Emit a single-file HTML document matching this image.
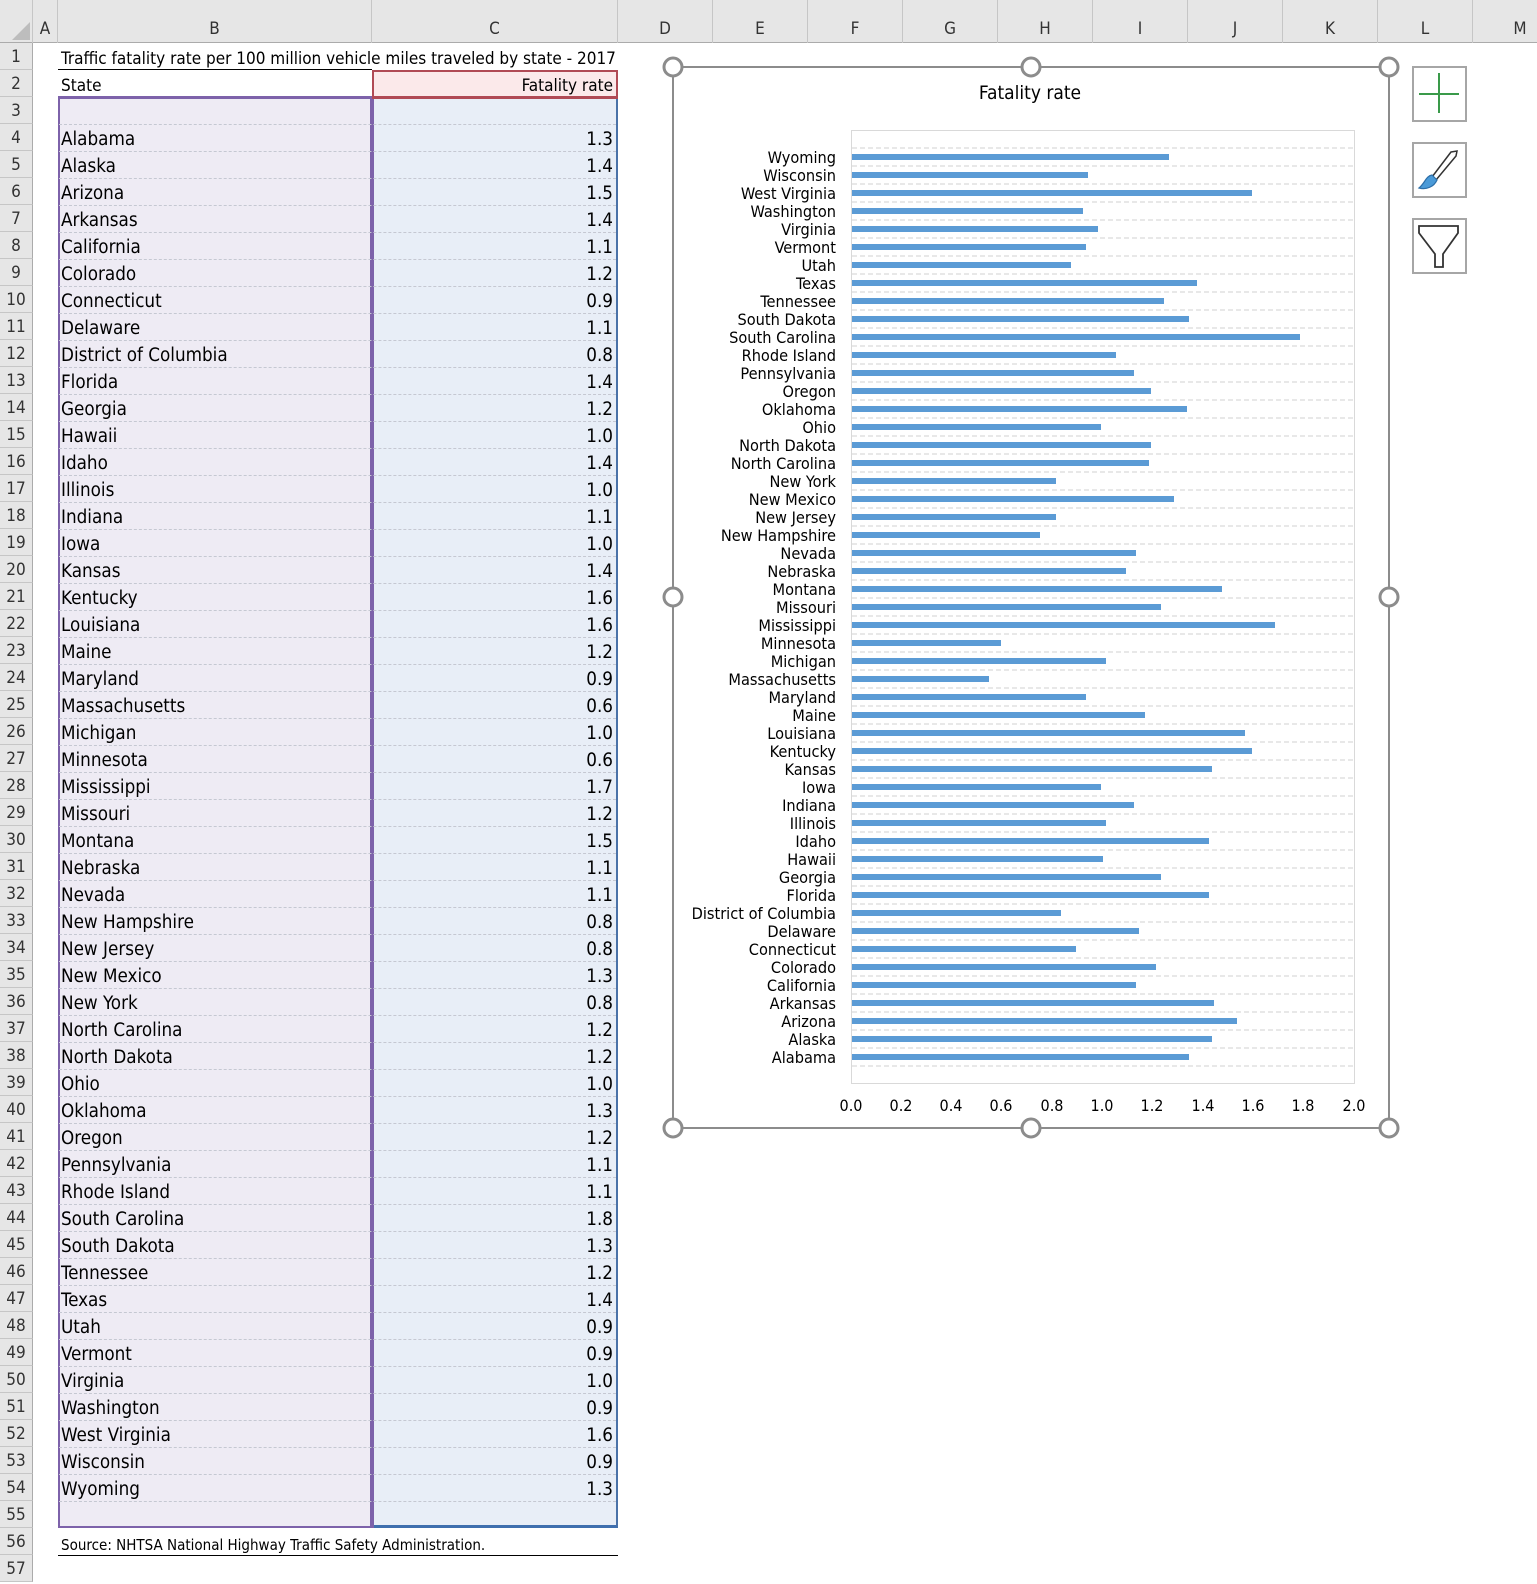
<!DOCTYPE html>
<html><head><meta charset="utf-8"><style>
*{margin:0;padding:0;box-sizing:border-box}
body{width:1537px;height:1583px;background:#fff;font-family:"DejaVu Sans Condensed","Liberation Sans",sans-serif;color:#000;position:relative;overflow:hidden}
.ch{position:absolute;top:0;height:43px;background:#e6e6e6;border-bottom:1px solid #ababab}
.colh{position:absolute;top:0;height:43px;border-right:1px solid #c6c6c6;font-size:17px;line-height:58px;text-align:center;color:#333}
.rh{position:absolute;left:0;width:33px;height:27px;background:#e6e6e6;border-bottom:1px solid #c6c6c6;border-right:1px solid #ababab;font-size:17px;line-height:29px;text-align:center;color:#333}
.r{position:absolute;height:27px;font-size:18.7px;line-height:31px;white-space:nowrap}
.b{left:61px}
.c{left:372px;width:241px;text-align:right}
.sep{position:absolute;left:59px;width:557px;height:0;border-top:1px dashed #c5c8d2}
</style></head><body>
<div class="ch" style="left:0;width:1537px"></div>
<svg style="position:absolute;left:0;top:0" width="33" height="43"><polygon points="30,22 30,40 12,40" fill="#bdbdbd"/></svg>
<div class="colh" style="left:0;width:33px;line-height:43px"></div>
<div class="colh" style="left:33px;width:25px">A</div>
<div class="colh" style="left:58px;width:314px">B</div>
<div class="colh" style="left:372px;width:246px">C</div>
<div class="colh" style="left:618px;width:95px">D</div>
<div class="colh" style="left:713px;width:95px">E</div>
<div class="colh" style="left:808px;width:95px">F</div>
<div class="colh" style="left:903px;width:95px">G</div>
<div class="colh" style="left:998px;width:95px">H</div>
<div class="colh" style="left:1093px;width:95px">I</div>
<div class="colh" style="left:1188px;width:95px">J</div>
<div class="colh" style="left:1283px;width:95px">K</div>
<div class="colh" style="left:1378px;width:95px">L</div>
<div class="colh" style="left:1473px;width:95px">M</div>

<div style="position:absolute;left:58px;top:97px;width:314px;height:1431px;background:#eeebf4;border:2px solid #7d62aa;border-top:none"></div>
<div style="position:absolute;left:372px;top:97px;width:246px;height:1431px;background:#e8eef7;border-right:2px solid #4a72a8;border-bottom:3px solid #3f6fae"></div>
<div style="position:absolute;left:372px;top:97px;width:2px;height:1431px;background:#7d62aa"></div>
<div style="position:absolute;left:58px;top:96px;width:316px;height:3px;background:#7d62aa"></div>
<div style="position:absolute;left:372px;top:70px;width:246px;height:29px;background:#fbe9ea;border:2px solid #b04a55;border-bottom-width:3px"></div>
<div style="position:absolute;left:58px;top:69px;width:314px;height:1px;background:#000"></div>
<div style="position:absolute;left:58px;top:1555px;width:560px;height:1px;background:#000"></div>

<div class="r b" style="top:44px;font-size:17px">Traffic fatality rate per 100 million vehicle miles traveled by state - 2017</div>
<div class="r b" style="top:71px;font-size:17px">State</div>
<div class="r c" style="top:71px;font-size:17px">Fatality rate</div>
<div class="r b" style="top:1530px;font-size:15px">Source: NHTSA National Highway Traffic Safety Administration.</div>

<div class="rh" style="top:43px">1</div><div class="rh" style="top:70px">2</div><div class="rh" style="top:97px">3</div><div class="rh" style="top:124px">4</div><div class="rh" style="top:151px">5</div><div class="rh" style="top:178px">6</div><div class="rh" style="top:205px">7</div><div class="rh" style="top:232px">8</div><div class="rh" style="top:259px">9</div><div class="rh" style="top:286px">10</div><div class="rh" style="top:313px">11</div><div class="rh" style="top:340px">12</div><div class="rh" style="top:367px">13</div><div class="rh" style="top:394px">14</div><div class="rh" style="top:421px">15</div><div class="rh" style="top:448px">16</div><div class="rh" style="top:475px">17</div><div class="rh" style="top:502px">18</div><div class="rh" style="top:529px">19</div><div class="rh" style="top:556px">20</div><div class="rh" style="top:583px">21</div><div class="rh" style="top:610px">22</div><div class="rh" style="top:637px">23</div><div class="rh" style="top:664px">24</div><div class="rh" style="top:691px">25</div><div class="rh" style="top:718px">26</div><div class="rh" style="top:745px">27</div><div class="rh" style="top:772px">28</div><div class="rh" style="top:799px">29</div><div class="rh" style="top:826px">30</div><div class="rh" style="top:853px">31</div><div class="rh" style="top:880px">32</div><div class="rh" style="top:907px">33</div><div class="rh" style="top:934px">34</div><div class="rh" style="top:961px">35</div><div class="rh" style="top:988px">36</div><div class="rh" style="top:1015px">37</div><div class="rh" style="top:1042px">38</div><div class="rh" style="top:1069px">39</div><div class="rh" style="top:1096px">40</div><div class="rh" style="top:1123px">41</div><div class="rh" style="top:1150px">42</div><div class="rh" style="top:1177px">43</div><div class="rh" style="top:1204px">44</div><div class="rh" style="top:1231px">45</div><div class="rh" style="top:1258px">46</div><div class="rh" style="top:1285px">47</div><div class="rh" style="top:1312px">48</div><div class="rh" style="top:1339px">49</div><div class="rh" style="top:1366px">50</div><div class="rh" style="top:1393px">51</div><div class="rh" style="top:1420px">52</div><div class="rh" style="top:1447px">53</div><div class="rh" style="top:1474px">54</div><div class="rh" style="top:1501px">55</div><div class="rh" style="top:1528px">56</div><div class="rh" style="top:1555px">57</div>

<div class="sep" style="top:124px"></div><div class="sep" style="top:151px"></div><div class="sep" style="top:178px"></div><div class="sep" style="top:205px"></div><div class="sep" style="top:232px"></div><div class="sep" style="top:259px"></div><div class="sep" style="top:286px"></div><div class="sep" style="top:313px"></div><div class="sep" style="top:340px"></div><div class="sep" style="top:367px"></div><div class="sep" style="top:394px"></div><div class="sep" style="top:421px"></div><div class="sep" style="top:448px"></div><div class="sep" style="top:475px"></div><div class="sep" style="top:502px"></div><div class="sep" style="top:529px"></div><div class="sep" style="top:556px"></div><div class="sep" style="top:583px"></div><div class="sep" style="top:610px"></div><div class="sep" style="top:637px"></div><div class="sep" style="top:664px"></div><div class="sep" style="top:691px"></div><div class="sep" style="top:718px"></div><div class="sep" style="top:745px"></div><div class="sep" style="top:772px"></div><div class="sep" style="top:799px"></div><div class="sep" style="top:826px"></div><div class="sep" style="top:853px"></div><div class="sep" style="top:880px"></div><div class="sep" style="top:907px"></div><div class="sep" style="top:934px"></div><div class="sep" style="top:961px"></div><div class="sep" style="top:988px"></div><div class="sep" style="top:1015px"></div><div class="sep" style="top:1042px"></div><div class="sep" style="top:1069px"></div><div class="sep" style="top:1096px"></div><div class="sep" style="top:1123px"></div><div class="sep" style="top:1150px"></div><div class="sep" style="top:1177px"></div><div class="sep" style="top:1204px"></div><div class="sep" style="top:1231px"></div><div class="sep" style="top:1258px"></div><div class="sep" style="top:1285px"></div><div class="sep" style="top:1312px"></div><div class="sep" style="top:1339px"></div><div class="sep" style="top:1366px"></div><div class="sep" style="top:1393px"></div><div class="sep" style="top:1420px"></div><div class="sep" style="top:1447px"></div><div class="sep" style="top:1474px"></div><div class="sep" style="top:1501px"></div>

<div class="r b" style="top:124px">Alabama</div><div class="r c" style="top:124px">1.3</div>
<div class="r b" style="top:151px">Alaska</div><div class="r c" style="top:151px">1.4</div>
<div class="r b" style="top:178px">Arizona</div><div class="r c" style="top:178px">1.5</div>
<div class="r b" style="top:205px">Arkansas</div><div class="r c" style="top:205px">1.4</div>
<div class="r b" style="top:232px">California</div><div class="r c" style="top:232px">1.1</div>
<div class="r b" style="top:259px">Colorado</div><div class="r c" style="top:259px">1.2</div>
<div class="r b" style="top:286px">Connecticut</div><div class="r c" style="top:286px">0.9</div>
<div class="r b" style="top:313px">Delaware</div><div class="r c" style="top:313px">1.1</div>
<div class="r b" style="top:340px">District of Columbia</div><div class="r c" style="top:340px">0.8</div>
<div class="r b" style="top:367px">Florida</div><div class="r c" style="top:367px">1.4</div>
<div class="r b" style="top:394px">Georgia</div><div class="r c" style="top:394px">1.2</div>
<div class="r b" style="top:421px">Hawaii</div><div class="r c" style="top:421px">1.0</div>
<div class="r b" style="top:448px">Idaho</div><div class="r c" style="top:448px">1.4</div>
<div class="r b" style="top:475px">Illinois</div><div class="r c" style="top:475px">1.0</div>
<div class="r b" style="top:502px">Indiana</div><div class="r c" style="top:502px">1.1</div>
<div class="r b" style="top:529px">Iowa</div><div class="r c" style="top:529px">1.0</div>
<div class="r b" style="top:556px">Kansas</div><div class="r c" style="top:556px">1.4</div>
<div class="r b" style="top:583px">Kentucky</div><div class="r c" style="top:583px">1.6</div>
<div class="r b" style="top:610px">Louisiana</div><div class="r c" style="top:610px">1.6</div>
<div class="r b" style="top:637px">Maine</div><div class="r c" style="top:637px">1.2</div>
<div class="r b" style="top:664px">Maryland</div><div class="r c" style="top:664px">0.9</div>
<div class="r b" style="top:691px">Massachusetts</div><div class="r c" style="top:691px">0.6</div>
<div class="r b" style="top:718px">Michigan</div><div class="r c" style="top:718px">1.0</div>
<div class="r b" style="top:745px">Minnesota</div><div class="r c" style="top:745px">0.6</div>
<div class="r b" style="top:772px">Mississippi</div><div class="r c" style="top:772px">1.7</div>
<div class="r b" style="top:799px">Missouri</div><div class="r c" style="top:799px">1.2</div>
<div class="r b" style="top:826px">Montana</div><div class="r c" style="top:826px">1.5</div>
<div class="r b" style="top:853px">Nebraska</div><div class="r c" style="top:853px">1.1</div>
<div class="r b" style="top:880px">Nevada</div><div class="r c" style="top:880px">1.1</div>
<div class="r b" style="top:907px">New Hampshire</div><div class="r c" style="top:907px">0.8</div>
<div class="r b" style="top:934px">New Jersey</div><div class="r c" style="top:934px">0.8</div>
<div class="r b" style="top:961px">New Mexico</div><div class="r c" style="top:961px">1.3</div>
<div class="r b" style="top:988px">New York</div><div class="r c" style="top:988px">0.8</div>
<div class="r b" style="top:1015px">North Carolina</div><div class="r c" style="top:1015px">1.2</div>
<div class="r b" style="top:1042px">North Dakota</div><div class="r c" style="top:1042px">1.2</div>
<div class="r b" style="top:1069px">Ohio</div><div class="r c" style="top:1069px">1.0</div>
<div class="r b" style="top:1096px">Oklahoma</div><div class="r c" style="top:1096px">1.3</div>
<div class="r b" style="top:1123px">Oregon</div><div class="r c" style="top:1123px">1.2</div>
<div class="r b" style="top:1150px">Pennsylvania</div><div class="r c" style="top:1150px">1.1</div>
<div class="r b" style="top:1177px">Rhode Island</div><div class="r c" style="top:1177px">1.1</div>
<div class="r b" style="top:1204px">South Carolina</div><div class="r c" style="top:1204px">1.8</div>
<div class="r b" style="top:1231px">South Dakota</div><div class="r c" style="top:1231px">1.3</div>
<div class="r b" style="top:1258px">Tennessee</div><div class="r c" style="top:1258px">1.2</div>
<div class="r b" style="top:1285px">Texas</div><div class="r c" style="top:1285px">1.4</div>
<div class="r b" style="top:1312px">Utah</div><div class="r c" style="top:1312px">0.9</div>
<div class="r b" style="top:1339px">Vermont</div><div class="r c" style="top:1339px">0.9</div>
<div class="r b" style="top:1366px">Virginia</div><div class="r c" style="top:1366px">1.0</div>
<div class="r b" style="top:1393px">Washington</div><div class="r c" style="top:1393px">0.9</div>
<div class="r b" style="top:1420px">West Virginia</div><div class="r c" style="top:1420px">1.6</div>
<div class="r b" style="top:1447px">Wisconsin</div><div class="r c" style="top:1447px">0.9</div>
<div class="r b" style="top:1474px">Wyoming</div><div class="r c" style="top:1474px">1.3</div>

<svg style="position:absolute;left:0;top:0" width="1537" height="1583" font-family="DejaVu Sans Condensed, Liberation Sans, sans-serif">
<rect x="673" y="67" width="716" height="1061" fill="#fff" stroke="#8c8c8c" stroke-width="2"/>
<text x="1030" y="99" font-size="19" text-anchor="middle">Fatality rate</text>
<rect x="851.5" y="130.5" width="503" height="953" fill="#fff" stroke="#d9d9d9"/>
<g stroke="#d0d0d0" stroke-dasharray="5,3" stroke-width="1">
<path d="M852 148H1354M852 166H1354M852 184H1354M852 202H1354M852 220H1354M852 238H1354M852 256H1354M852 274H1354M852 292H1354M852 310H1354M852 328H1354M852 346H1354M852 364H1354M852 382H1354M852 400H1354M852 418H1354M852 436H1354M852 454H1354M852 472H1354M852 490H1354M852 508H1354M852 526H1354M852 544H1354M852 562H1354M852 580H1354M852 598H1354M852 616H1354M852 634H1354M852 652H1354M852 670H1354M852 688H1354M852 706H1354M852 724H1354M852 742H1354M852 760H1354M852 778H1354M852 796H1354M852 814H1354M852 832H1354M852 850H1354M852 868H1354M852 886H1354M852 904H1354M852 922H1354M852 940H1354M852 958H1354M852 976H1354M852 994H1354M852 1012H1354M852 1030H1354M852 1048H1354M852 1066H1354"/>
</g>
<g fill="#5b9bd5">
<rect x="852" y="154" width="317" height="6"/><rect x="852" y="172" width="236" height="6"/><rect x="852" y="190" width="400" height="6"/><rect x="852" y="208" width="231" height="6"/><rect x="852" y="226" width="246" height="6"/><rect x="852" y="244" width="234" height="6"/><rect x="852" y="262" width="219" height="6"/><rect x="852" y="280" width="345" height="6"/><rect x="852" y="298" width="312" height="6"/><rect x="852" y="316" width="337" height="6"/><rect x="852" y="334" width="448" height="6"/><rect x="852" y="352" width="264" height="6"/><rect x="852" y="370" width="282" height="6"/><rect x="852" y="388" width="299" height="6"/><rect x="852" y="406" width="335" height="6"/><rect x="852" y="424" width="249" height="6"/><rect x="852" y="442" width="299" height="6"/><rect x="852" y="460" width="297" height="6"/><rect x="852" y="478" width="204" height="6"/><rect x="852" y="496" width="322" height="6"/><rect x="852" y="514" width="204" height="6"/><rect x="852" y="532" width="188" height="6"/><rect x="852" y="550" width="284" height="6"/><rect x="852" y="568" width="274" height="6"/><rect x="852" y="586" width="370" height="6"/><rect x="852" y="604" width="309" height="6"/><rect x="852" y="622" width="423" height="6"/><rect x="852" y="640" width="149" height="6"/><rect x="852" y="658" width="254" height="6"/><rect x="852" y="676" width="137" height="6"/><rect x="852" y="694" width="234" height="6"/><rect x="852" y="712" width="293" height="6"/><rect x="852" y="730" width="393" height="6"/><rect x="852" y="748" width="400" height="6"/><rect x="852" y="766" width="360" height="6"/><rect x="852" y="784" width="249" height="6"/><rect x="852" y="802" width="282" height="6"/><rect x="852" y="820" width="254" height="6"/><rect x="852" y="838" width="357" height="6"/><rect x="852" y="856" width="251" height="6"/><rect x="852" y="874" width="309" height="6"/><rect x="852" y="892" width="357" height="6"/><rect x="852" y="910" width="209" height="6"/><rect x="852" y="928" width="287" height="6"/><rect x="852" y="946" width="224" height="6"/><rect x="852" y="964" width="304" height="6"/><rect x="852" y="982" width="284" height="6"/><rect x="852" y="1000" width="362" height="6"/><rect x="852" y="1018" width="385" height="6"/><rect x="852" y="1036" width="360" height="6"/><rect x="852" y="1054" width="337" height="6"/>
</g>
<g font-size="16.2" text-anchor="end">
<text x="836" y="163">Wyoming</text><text x="836" y="181">Wisconsin</text><text x="836" y="199">West Virginia</text><text x="836" y="217">Washington</text><text x="836" y="235">Virginia</text><text x="836" y="253">Vermont</text><text x="836" y="271">Utah</text><text x="836" y="289">Texas</text><text x="836" y="307">Tennessee</text><text x="836" y="325">South Dakota</text><text x="836" y="343">South Carolina</text><text x="836" y="361">Rhode Island</text><text x="836" y="379">Pennsylvania</text><text x="836" y="397">Oregon</text><text x="836" y="415">Oklahoma</text><text x="836" y="433">Ohio</text><text x="836" y="451">North Dakota</text><text x="836" y="469">North Carolina</text><text x="836" y="487">New York</text><text x="836" y="505">New Mexico</text><text x="836" y="523">New Jersey</text><text x="836" y="541">New Hampshire</text><text x="836" y="559">Nevada</text><text x="836" y="577">Nebraska</text><text x="836" y="595">Montana</text><text x="836" y="613">Missouri</text><text x="836" y="631">Mississippi</text><text x="836" y="649">Minnesota</text><text x="836" y="667">Michigan</text><text x="836" y="685">Massachusetts</text><text x="836" y="703">Maryland</text><text x="836" y="721">Maine</text><text x="836" y="739">Louisiana</text><text x="836" y="757">Kentucky</text><text x="836" y="775">Kansas</text><text x="836" y="793">Iowa</text><text x="836" y="811">Indiana</text><text x="836" y="829">Illinois</text><text x="836" y="847">Idaho</text><text x="836" y="865">Hawaii</text><text x="836" y="883">Georgia</text><text x="836" y="901">Florida</text><text x="836" y="919">District of Columbia</text><text x="836" y="937">Delaware</text><text x="836" y="955">Connecticut</text><text x="836" y="973">Colorado</text><text x="836" y="991">California</text><text x="836" y="1009">Arkansas</text><text x="836" y="1027">Arizona</text><text x="836" y="1045">Alaska</text><text x="836" y="1063">Alabama</text>
</g>
<g font-size="16" text-anchor="middle">
<text x="851" y="1111">0.0</text><text x="901" y="1111">0.2</text><text x="951" y="1111">0.4</text><text x="1001" y="1111">0.6</text><text x="1052" y="1111">0.8</text><text x="1102" y="1111">1.0</text><text x="1152" y="1111">1.2</text><text x="1203" y="1111">1.4</text><text x="1253" y="1111">1.6</text><text x="1303" y="1111">1.8</text><text x="1354" y="1111">2.0</text>
</g>
<g fill="#fff" stroke="#8c8c8c" stroke-width="3">
<circle cx="673" cy="67" r="9"/><circle cx="1031" cy="67" r="9"/><circle cx="1389" cy="67" r="9"/>
<circle cx="673" cy="597" r="9"/><circle cx="1389" cy="597" r="9"/>
<circle cx="673" cy="1128" r="9"/><circle cx="1031" cy="1128" r="9"/><circle cx="1389" cy="1128" r="9"/>
</g>
<g fill="#fff" stroke="#a6a6a6" stroke-width="2">
<rect x="1413" y="67" width="53" height="54"/><rect x="1413" y="143" width="53" height="54"/><rect x="1413" y="219" width="53" height="54"/>
</g>
<path d="M1439 73V113M1419 94H1459" stroke="#3a9a4a" stroke-width="2"/>
<path d="M1451 152L1457 151L1456 156L1436 180L1432 177Z" fill="#fff" stroke="#333" stroke-width="1.5"/>
<path d="M1432 175C1426 176 1425 183 1419 188C1426 190 1434 187 1437 180Z" fill="#4a9ad8" stroke="#2c6ea8" stroke-width="1.2"/>
<path d="M1419 226H1458V233L1443 254V267H1435V254L1419 233Z" fill="#fff" stroke="#333" stroke-width="1.8"/>
</svg>
</body></html>
